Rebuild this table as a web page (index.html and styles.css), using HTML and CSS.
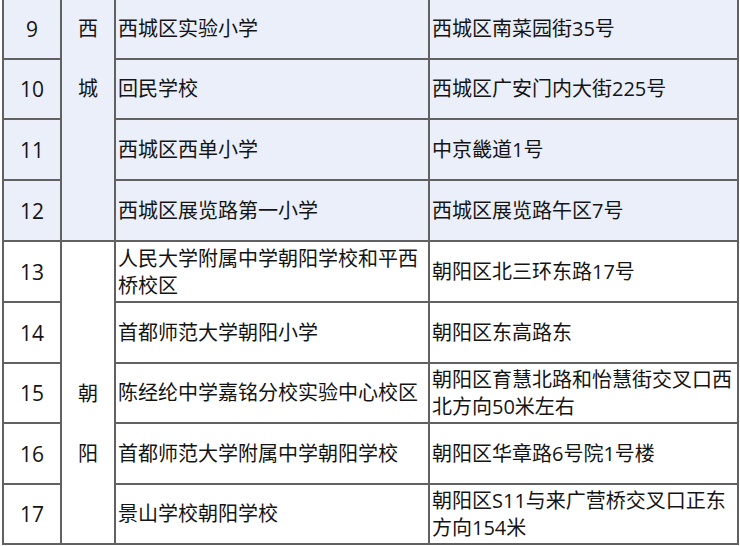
FILE: index.html
```html
<!DOCTYPE html>
<html lang="zh-CN">
<head>
<meta charset="utf-8">
<title>学校列表</title>
<link rel="stylesheet" href="styles.css">
</head>
<body>
<table class="schools">
  <colgroup>
    <col class="c-no">
    <col class="c-dist">
    <col class="c-name">
    <col class="c-addr">
  </colgroup>
  <tbody>
    <tr class="alt h61">
      <td class="no">9</td>
      <td class="dist" rowspan="4"><span class="dl">西</span><span class="dl">城</span></td>
      <td>西城区实验小学</td>
      <td>西城区南菜园街35号</td>
    </tr>
    <tr class="alt h60">
      <td class="no">10</td>
      <td>回民学校</td>
      <td>西城区广安门内大街225号</td>
    </tr>
    <tr class="alt h61">
      <td class="no">11</td>
      <td>西城区西单小学</td>
      <td>中京畿道1号</td>
    </tr>
    <tr class="alt h61">
      <td class="no">12</td>
      <td>西城区展览路第一小学</td>
      <td>西城区展览路午区7号</td>
    </tr>
    <tr class="h61">
      <td class="no">13</td>
      <td class="dist dist-cy" rowspan="5"><span class="dl">朝</span><span class="dl">阳</span></td>
      <td class="two">人民大学附属中学朝阳学校和平西桥校区</td>
      <td>朝阳区北三环东路17号</td>
    </tr>
    <tr class="h61">
      <td class="no">14</td>
      <td>首都师范大学朝阳小学</td>
      <td>朝阳区东高路东</td>
    </tr>
    <tr class="h60">
      <td class="no">15</td>
      <td>陈经纶中学嘉铭分校实验中心校区</td>
      <td class="two">朝阳区育慧北路和怡慧街交叉口西北方向50米左右</td>
    </tr>
    <tr class="h61">
      <td class="no">16</td>
      <td>首都师范大学附属中学朝阳学校</td>
      <td>朝阳区华章路6号院1号楼</td>
    </tr>
    <tr class="h60">
      <td class="no">17</td>
      <td>景山学校朝阳学校</td>
      <td class="two">朝阳区S11与来广营桥交叉口正东方向154米</td>
    </tr>
  </tbody>
</table>
</body>
</html>
```
FILE: styles.css
```css
html, body {
  margin: 0;
  padding: 0;
  background: #ffffff;
}

body {
  font-family: "Open Sans", "Noto Sans CJK SC", sans-serif;
  font-size: 20px;
  color: #141414;
  overflow: hidden;
}

.schools {
  border-collapse: collapse;
  table-layout: fixed;
  width: 737px;
  margin: -3px 0 0 2px;
}

.c-no { width: 58px; }
.c-dist { width: 54px; }
.c-name { width: 314px; }
.c-addr { width: 309px; }

.schools td {
  border: 2px solid #616161;
  padding: 0 2px 0 2px;
  vertical-align: middle;
  line-height: 26px;
  word-break: break-all;
}

.h61 { height: 61px; }
.h60 { height: 60px; }

.alt td {
  background: #eaeff9;
}

.schools td.no {
  text-align: center;
  padding: 0;
  font-size: 21px;
}

.schools td.two {
  line-height: 27px;
}

.schools td.dist {
  vertical-align: top;
  text-align: center;
  padding: 0;
  background: #eaeff9;
}

.schools td.dist-cy {
  background: #ffffff;
  padding-top: 122px;
}

.dl {
  display: block;
  line-height: 60px;
}
```
